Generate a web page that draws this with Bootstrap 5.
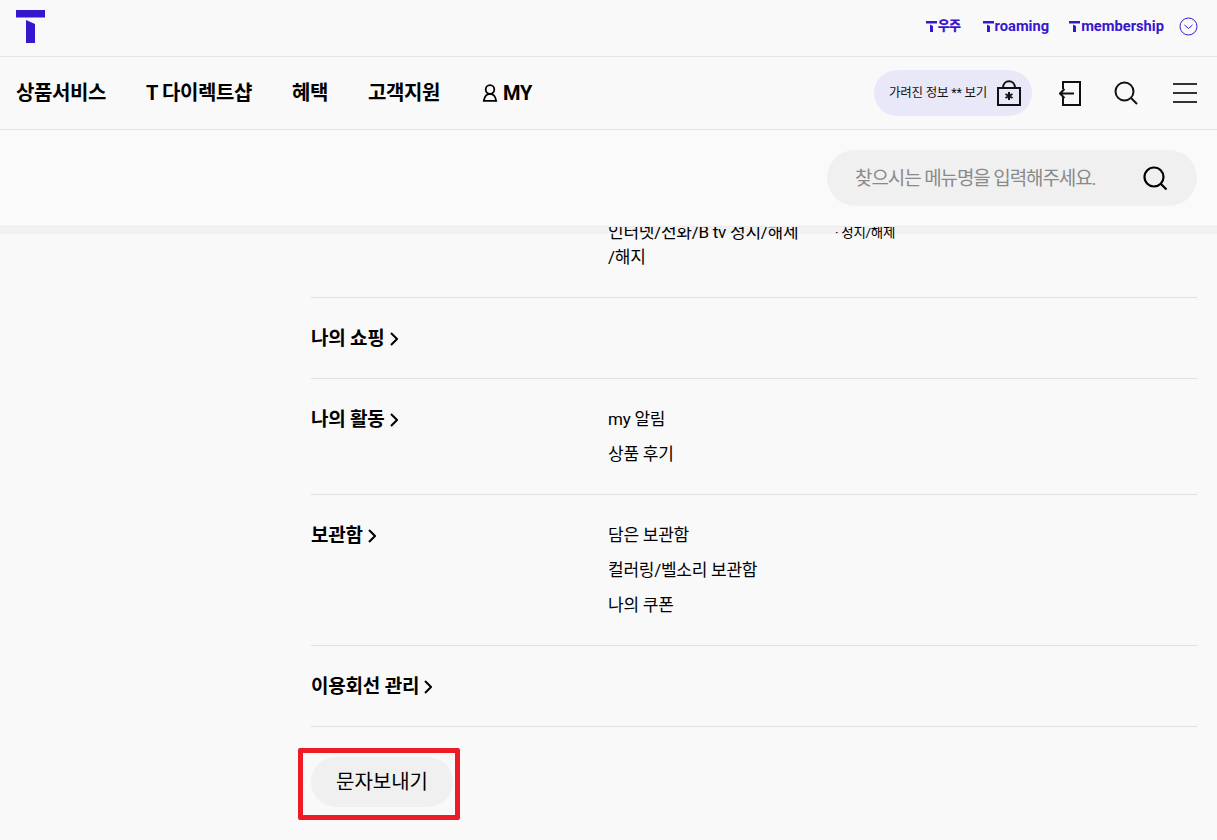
<!DOCTYPE html>
<html lang="ko">
<head>
<meta charset="utf-8">
<title>T world</title>
<link href="https://cdn.jsdelivr.net/npm/bootstrap@5.3.0/dist/css/bootstrap.min.css" rel="stylesheet">
<style>
html,body{height:840px;overflow:hidden}
body{background:#f9f9f9;color:#000;font-family:Roboto,"Noto Sans CJK KR",sans-serif}
.hdr{position:relative;z-index:2;background:#f9f9f9}
.band{height:7px;background:#f2f2f2}
.topbar{height:57px;border-bottom:1px solid #e5e5e5;padding:10px 19px 0 16px}
.logo{display:block;width:29px;height:33px}
.ext{gap:20px;padding-top:6px}
.ext a{display:flex;align-items:center;gap:1px;color:#3617ce;font-size:14.7px;font-weight:700;letter-spacing:0;text-decoration:none;line-height:20px}
.ext a.uz{font-size:13px;font-weight:900;letter-spacing:-.5px;margin-right:2px}
.ext .chev{margin-left:-5px}
.navrow{height:73px;border-bottom:1px solid #e5e5e5;padding:0 20px 0 16px}
.mainnav{gap:40px;font-size:20px;font-weight:700;letter-spacing:-.4px}
.mainnav a{color:#000;text-decoration:none}
.mainnav a.my{gap:5px;margin-left:2px}
.hide-pill{width:158px;height:46px;background:#e9e8f8;border-radius:23px;font-size:12.5px;letter-spacing:-.2px;padding:0 11px 0 15px;color:#111}
.gap-exit{margin-left:27px}
.gap-find{margin-left:33px}
.gap-menu{margin-left:35px}
.searchstrip{height:97px;background:#fafafa;border-bottom:1px solid #ececec;padding:20px 20px 0 0}
.searchbox{width:370px;height:56px;background:#f0f0f0;border-radius:28px;padding:0 29px 0 28px;font-size:19px;letter-spacing:-1.1px;color:#8a8a8a}
.searchbox span{padding-top:2px}
.content{position:relative;z-index:1;margin-top:-14px;padding-left:311px;padding-right:20px}
.mrow{border-bottom:1px solid #e1e1e1;padding:23px 0 22px}
.mrow.first{padding:0 0 27px}
.mtitle{width:297px;font-size:19px;font-weight:700;line-height:35px;letter-spacing:-.2px;height:35px;white-space:nowrap}
.mtitle svg{margin-left:5px;vertical-align:-1px}
.mlist{font-size:17px;line-height:35px;letter-spacing:-.25px}
.mrow.first .w1{width:200px;font-size:17px;line-height:25px;letter-spacing:-.25px}
.mrow.first .sub{margin-left:27px;font-size:13.5px;line-height:25px;letter-spacing:-.3px}
.mrow.first .mtitle{height:auto}
.smswrap{position:relative;display:inline-block;margin-top:30px}
.smsbtn{width:142px;height:50px;border-radius:25px;background:#f0f0f0;font-size:20px;color:#000;border:0;padding:0;letter-spacing:0}
.annot{position:absolute;left:-13px;top:-9px;width:162px;height:72px;border:5px solid #ed1c24;border-radius:2px;pointer-events:none}
</style>
</head>
<body>
<header class="hdr">
  <div class="topbar d-flex justify-content-between align-items-start">
    <a href="#" aria-label="T"><svg class="logo" viewBox="0 0 29 33"><path fill="#3617ce" d="M0 0h29v7.500H0zM10 10l9 4v19h-9z"/></svg></a>
    <div class="d-flex align-items-center ext">
      <a href="#" class="uz"><svg width="11" height="11" viewBox="0 0 11 11"><path fill="#3617ce" d="M0 0h11v2.500H0zM4 3.500l3 1.500v6H4z"/></svg><span>우주</span></a>
      <a href="#"><svg width="11" height="11" viewBox="0 0 11 11"><path fill="#3617ce" d="M0 0h11v2.500H0zM4 3.500l3 1.500v6H4z"/></svg><span>roaming</span></a>
      <a href="#"><svg width="11" height="11" viewBox="0 0 11 11"><path fill="#3617ce" d="M0 0h11v2.500H0zM4 3.500l3 1.500v6H4z"/></svg><span>membership</span></a>
      <svg class="chev" width="19" height="19" viewBox="0 0 19 19" fill="none" stroke="#3617ce" stroke-width="1"><circle cx="9.500" cy="9.500" r="8.500"/><path d="M5.500 8l4 3.500 4-3.500"/></svg>
    </div>
  </div>
  <div class="navrow d-flex justify-content-between align-items-center">
    <nav class="d-flex align-items-center mainnav">
      <a href="#">상품서비스</a>
      <a href="#">T 다이렉트샵</a>
      <a href="#">혜택</a>
      <a href="#">고객지원</a>
      <a href="#" class="d-flex align-items-center my"><svg width="16" height="18" viewBox="0 0 16 18" fill="none" stroke="#000" stroke-width="1.800"><circle cx="8" cy="5.500" r="4.300"/><path d="M8 9.800c-3 0-5.500 2.500-6.200 7h12.400c-.7-4.500-3.200-7-6.200-7z"/></svg><span>MY</span></a>
    </nav>
    <div class="d-flex align-items-center">
      <div class="hide-pill d-flex align-items-center justify-content-between">
        <span>가려진 정보 ** 보기</span>
        <svg width="24" height="26" viewBox="0 0 24 26" fill="none" stroke="#111" stroke-width="2"><rect x="1" y="8" width="22" height="17"/><path d="M6 8c0-9 12-9 12 0"/><path stroke-width="2" d="M12 12v8M8.500 14l7 4M15.500 14l-7 4"/></svg>
      </div>
      <svg class="gap-exit" width="22" height="25" viewBox="0 0 22 25" fill="none" stroke="#111" stroke-width="2"><path d="M4 8V1h17v23H4v-8"/><path d="M15 12.500H1M5.500 8L1 12.500 5.500 17"/></svg>
      <svg class="gap-find" width="24" height="24" viewBox="0 0 24 24" fill="none" stroke="#111" stroke-width="2"><circle cx="10.500" cy="10.500" r="9"/><path d="M17 17l6 6"/></svg>
      <svg class="gap-menu" width="24" height="20" viewBox="0 0 24 20" fill="none" stroke="#333" stroke-width="2"><path d="M0 1h24M0 10h24M0 19h24"/></svg>
    </div>
  </div>
  <div class="searchstrip d-flex justify-content-end">
    <div class="searchbox d-flex align-items-center justify-content-between">
      <span>찾으시는 메뉴명을 입력해주세요.</span>
      <svg width="25" height="25" viewBox="0 0 25 25" fill="none" stroke="#000" stroke-width="2.200"><circle cx="11" cy="11" r="9.500"/><path d="M17.500 17.500l6 6"/></svg>
    </div>
  </div>
</header>
<div class="band"></div>
<main class="content">
  <div class="mrow first d-flex">
    <div class="mtitle"></div>
    <div class="w1">인터넷/전화/B tv 정지/해제<br>/해지</div>
    <div class="sub">· 정지/해제</div>
  </div>
  <div class="mrow d-flex">
    <div class="mtitle">나의 쇼핑<svg width="8" height="14" viewBox="0 0 8 14" fill="none" stroke="#000" stroke-width="2"><path d="M1 1l6 6-6 6"/></svg></div>
  </div>
  <div class="mrow d-flex">
    <div class="mtitle">나의 활동<svg width="8" height="14" viewBox="0 0 8 14" fill="none" stroke="#000" stroke-width="2"><path d="M1 1l6 6-6 6"/></svg></div>
    <div class="mlist"><div>my 알림</div><div>상품 후기</div></div>
  </div>
  <div class="mrow d-flex">
    <div class="mtitle">보관함<svg width="8" height="14" viewBox="0 0 8 14" fill="none" stroke="#000" stroke-width="2"><path d="M1 1l6 6-6 6"/></svg></div>
    <div class="mlist"><div>담은 보관함</div><div>컬러링/벨소리 보관함</div><div>나의 쿠폰</div></div>
  </div>
  <div class="mrow d-flex">
    <div class="mtitle">이용회선 관리<svg width="8" height="14" viewBox="0 0 8 14" fill="none" stroke="#000" stroke-width="2"><path d="M1 1l6 6-6 6"/></svg></div>
  </div>
  <div class="smswrap">
    <button type="button" class="btn smsbtn">문자보내기</button>
    <span class="annot"></span>
  </div>
</main>
<script src="https://cdn.jsdelivr.net/npm/bootstrap@5.3.0/dist/js/bootstrap.bundle.min.js"></script>
</body>
</html>
